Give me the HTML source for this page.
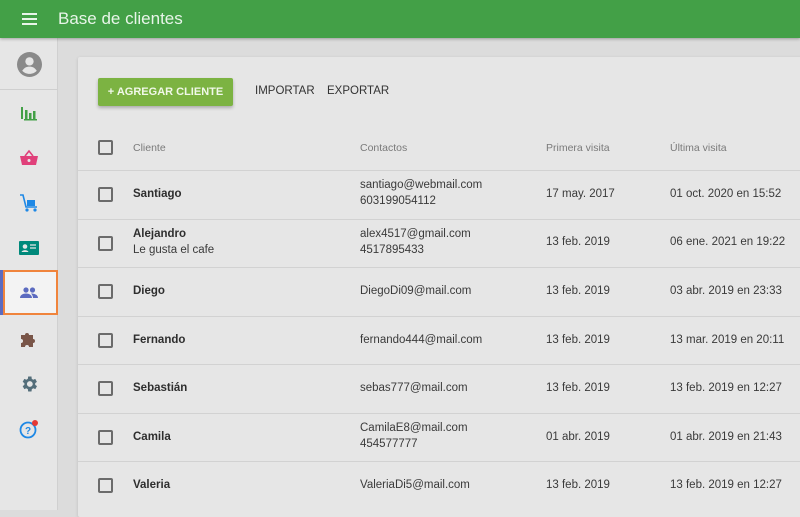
<!DOCTYPE html>
<html><head><style>
*{margin:0;padding:0;box-sizing:border-box}
body{width:800px;height:510px;overflow:hidden;background:#dcdcdc;font-family:"Liberation Sans",Roboto,sans-serif;position:relative}
.hdr{position:absolute;left:0;top:0;width:800px;height:38px;background:#43a047;box-shadow:0 1px 3px rgba(0,0,0,.3);z-index:3}
.hdr .t{position:absolute;left:58px;top:9px;font-size:17px;color:#e8f5e9}
.hdr .m{position:absolute;left:22px;top:13px;width:15px;height:2px;background:#e8f5e9;box-shadow:0 5px 0 #e8f5e9,0 10px 0 #e8f5e9}
.side{position:absolute;left:0;top:38px;width:58px;height:472px;background:#e6e6e6;border-right:1px solid #d0d0d0}
.side .sep{position:absolute;left:0;top:51px;width:58px;height:1px;background:#cfcfcf}
.ic{position:absolute;left:19px;width:20px;height:20px}
.sel{position:absolute;left:3px;top:232px;width:55px;height:45px;background:#f3f3f3;border:2px solid #f0843c}
.bar{position:absolute;left:0;top:232px;width:3px;height:45px;background:#5c6bc0}
.card{position:absolute;left:78px;top:57px;width:730px;height:460px;background:#e6e6e6;box-shadow:0 1px 3px rgba(0,0,0,.15);border-radius:2px}
.btn{position:absolute;left:20px;top:21px;width:135px;height:28px;background:#7cb342;color:#f1f8e9;font-size:11px;font-weight:bold;text-align:center;line-height:28px;box-shadow:0 2px 3px rgba(0,0,0,.25);border-radius:2px}
.lk{position:absolute;top:28px;font-size:11.5px;color:#333}
.row{position:absolute;left:0;width:730px;border-top:1px solid #d2d2d2}
.cb{position:absolute;left:20px;width:15px;height:15px;border:2px solid #6b6b6b;border-radius:2px}
.c{position:absolute;font-size:11.5px;color:#3a3a3a;line-height:16px}
.h{font-size:10.5px;color:#7a7a7a}
b{color:#2e2e2e}
</style></head><body>
<div class="hdr"><div class="m"></div><div class="t">Base de clientes</div></div>
<div class="side">
<div class="sep"></div>
<svg class="ic" style="left:17px;top:14px;width:25px;height:25px" viewBox="0 0 24 24"><circle cx="12" cy="12" r="12" fill="#8a8a8a"/><circle cx="12" cy="9" r="4" fill="#e6e6e6"/><path d="M5 18c2-3 4-4 7-4s5 1 7 4c-2 2-4 3-7 3s-5-1-7-3z" fill="#e6e6e6"/></svg>
<svg class="ic" style="top:65px" viewBox="0 0 20 20"><path d="M2 4h2v12h-2zM5 16h13v1.5H5zM6 7h2.5v9H6zM10 10h2.5v6H10zM14 8h2.5v8H14z" fill="#43a047"/></svg>
<svg class="ic" style="top:110px" viewBox="0 0 20 20"><path d="M6 8l4-5 4 5" stroke="#e0407a" stroke-width="1.6" fill="none"/><path d="M1 8h18l-2 9H3z" fill="#e0407a"/><circle cx="10" cy="12.5" r="1.5" fill="#e6e6e6"/></svg>
<svg class="ic" style="top:155px" viewBox="0 0 20 20"><path d="M1 2h3l3 12h11" stroke="#1e88e5" stroke-width="1.6" fill="none"/><rect x="8" y="7" width="8" height="6" fill="#1e88e5"/><circle cx="8" cy="17" r="1.6" fill="#1e88e5"/><circle cx="16" cy="17" r="1.6" fill="#1e88e5"/></svg>
<svg class="ic" style="top:200px" viewBox="0 0 20 20"><rect x="0" y="3" width="20" height="14" rx="1" fill="#00897b"/><circle cx="6" cy="8.5" r="2.3" fill="#e6e6e6"/><path d="M2.5 14c1-2.5 6-2.5 7 0z" fill="#e6e6e6"/><path d="M11 7h6M11 10h6" stroke="#e6e6e6" stroke-width="1.3"/></svg>
<div class="bar"></div><div class="sel"></div>
<svg class="ic" style="top:245px" viewBox="0 0 20 20"><circle cx="7" cy="7" r="2.6" fill="#5c6bc0"/><circle cx="13.5" cy="7" r="2.6" fill="#5c6bc0"/><path d="M1 15c0-3 3-4.5 6-4.5s6 1.5 6 4.5zM12 10.5c3 0 7 1 7 4.5h-5c0-2-1-3.5-2-4.5z" fill="#5c6bc0"/></svg>
<svg class="ic" style="top:291px" viewBox="0 0 20 20"><path d="M2 6h4a2 2 0 1 1 4 0h4v4a2 2 0 1 1 0 4v4h-4a2 2 0 1 0-4 0H2v-4a2 2 0 1 0 0-4z" fill="#795548"/></svg>
<svg class="ic" style="top:336px" viewBox="0 0 24 24"><path fill="#546e7a" d="M19.4 13a7.5 7.5 0 0 0 0-2l2.1-1.6-2-3.5-2.5 1a7 7 0 0 0-1.7-1L15 3h-4l-.4 2.9a7 7 0 0 0-1.7 1l-2.5-1-2 3.5L6.5 11a7.5 7.5 0 0 0 0 2l-2.1 1.6 2 3.5 2.5-1a7 7 0 0 0 1.7 1L11 21h4l.4-2.9a7 7 0 0 0 1.7-1l2.5 1 2-3.5zM13 15.5a3.5 3.5 0 1 1 0-7 3.5 3.5 0 0 1 0 7z"/></svg>
<svg class="ic" style="top:381px" viewBox="0 0 20 20"><circle cx="9" cy="11" r="7.5" stroke="#1e88e5" stroke-width="1.8" fill="none"/><text x="9" y="15" font-size="10" font-weight="bold" text-anchor="middle" fill="#1e88e5" font-family="Liberation Sans">?</text><circle cx="16" cy="4" r="3" fill="#e53935"/></svg>
</div>
<div class="card">
<div class="btn">+ AGREGAR CLIENTE</div>
<div class="lk" style="left:177px">IMPORTAR</div>
<div class="lk" style="left:249px">EXPORTAR</div>
<div class="cb" style="top:83px"></div>
<div class="c h" style="left:55px;top:83px">Cliente</div>
<div class="c h" style="left:282px;top:83px">Contactos</div>
<div class="c h" style="left:468px;top:83px">Primera visita</div>
<div class="c h" style="left:592px;top:83px">Última visita</div>

<div class="row" style="top:113px;height:49px"><div class="cb" style="top:16px"></div><div class="c" style="left:55px;top:15px"><b>Santiago</b></div><div class="c" style="left:282px;top:6px">santiago@webmail.com<br>603199054112</div><div class="c" style="left:468px;top:15px">17 may. 2017</div><div class="c" style="left:592px;top:15px">01 oct. 2020 en 15:52</div></div>
<div class="row" style="top:162px;height:48px"><div class="cb" style="top:16px"></div><div class="c" style="left:55px;top:6px"><b>Alejandro</b><br>Le gusta el cafe</div><div class="c" style="left:282px;top:6px">alex4517@gmail.com<br>4517895433</div><div class="c" style="left:468px;top:14px">13 feb. 2019</div><div class="c" style="left:592px;top:14px">06 ene. 2021 en 19:22</div></div>
<div class="row" style="top:210px;height:49px"><div class="cb" style="top:16px"></div><div class="c" style="left:55px;top:15px"><b>Diego</b></div><div class="c" style="left:282px;top:15px">DiegoDi09@mail.com</div><div class="c" style="left:468px;top:15px">13 feb. 2019</div><div class="c" style="left:592px;top:15px">03 abr. 2019 en 23:33</div></div>
<div class="row" style="top:259px;height:48px"><div class="cb" style="top:16px"></div><div class="c" style="left:55px;top:15px"><b>Fernando</b></div><div class="c" style="left:282px;top:15px">fernando444@mail.com</div><div class="c" style="left:468px;top:15px">13 feb. 2019</div><div class="c" style="left:592px;top:15px">13 mar. 2019 en 20:11</div></div>
<div class="row" style="top:307px;height:49px"><div class="cb" style="top:16px"></div><div class="c" style="left:55px;top:15px"><b>Sebastián</b></div><div class="c" style="left:282px;top:15px">sebas777@mail.com</div><div class="c" style="left:468px;top:15px">13 feb. 2019</div><div class="c" style="left:592px;top:15px">13 feb. 2019 en 12:27</div></div>
<div class="row" style="top:356px;height:48px"><div class="cb" style="top:16px"></div><div class="c" style="left:55px;top:15px"><b>Camila</b></div><div class="c" style="left:282px;top:6px">CamilaE8@mail.com<br>454577777</div><div class="c" style="left:468px;top:15px">01 abr. 2019</div><div class="c" style="left:592px;top:15px">01 abr. 2019 en 21:43</div></div>
<div class="row" style="top:404px;height:49px"><div class="cb" style="top:16px"></div><div class="c" style="left:55px;top:15px"><b>Valeria</b></div><div class="c" style="left:282px;top:15px">ValeriaDi5@mail.com</div><div class="c" style="left:468px;top:15px">13 feb. 2019</div><div class="c" style="left:592px;top:15px">13 feb. 2019 en 12:27</div></div>
</div>
</body></html>
